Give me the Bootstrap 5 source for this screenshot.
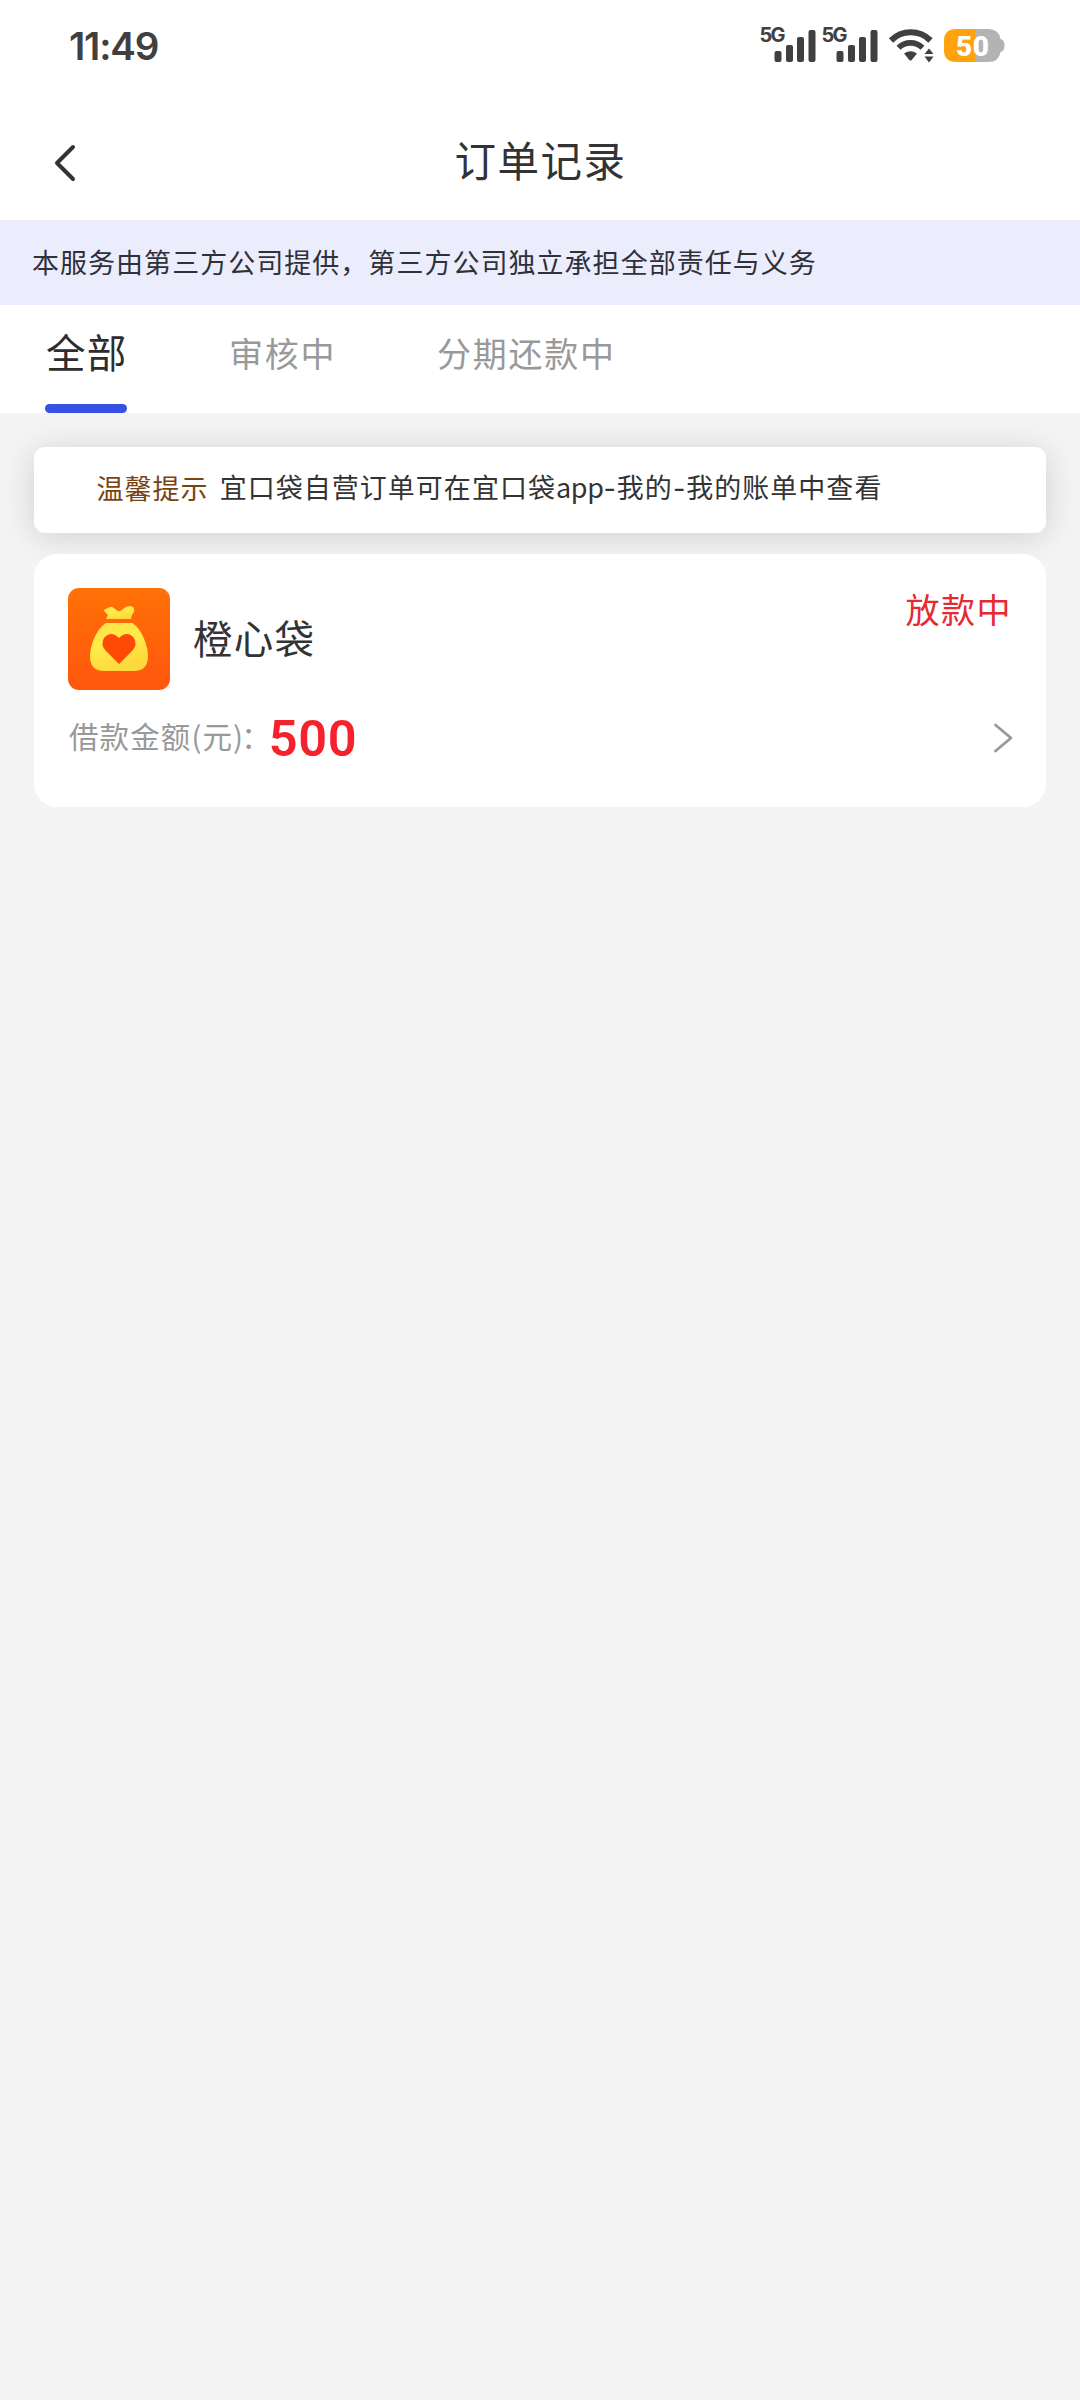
<!DOCTYPE html>
<html lang="zh-CN">
<head>
<meta charset="utf-8">
<meta name="viewport" content="width=device-width, initial-scale=1">
<title>订单记录</title>
<link href="https://cdn.jsdelivr.net/npm/bootstrap@5.3.0/dist/css/bootstrap.min.css" rel="stylesheet">
<style>
  body { background: #f4f4f4; color: #333; font-family: "Noto Sans CJK SC", sans-serif; min-height: 2400px; font-weight: 400; }
  .status-bar { height: 90px; padding: 0 75px 0 69px; }
  .clock { font: 600 38.5px/90px Inter, sans-serif; color: #404040; letter-spacing: -1.2px; padding-top: 2px; }
  .status-icons { width: 247px; height: 90px; }
  .page-head { height: 130px; }
  .back-btn { width: 130px; height: 146px; }
  .page-title { font-size: 41.5px; line-height: 60px; letter-spacing: 1.5px; padding: 7px 0 0 1px; }
  .third-party { height: 85px; background: #ebedfd; padding-left: 32px; font-size: 27px; letter-spacing: 1.03px; color: #2f3038; }
  .order-tabs { height: 108px; padding-left: 45px; gap: 102px; }
  .order-tabs .nav-link { color: #999; font-size: 34px; letter-spacing: 1.7px; height: 108px; line-height: 96px; }
  .order-tabs .nav-link.active { color: #2d2d2d; font-size: 39.5px; letter-spacing: 1.2px; line-height: 91px; width: 82px; text-indent: 1px; }
  .order-tabs .nav-link + .nav-link + .nav-link { margin-left: -1px; }
  .tab-ink { height: 9px; border-radius: 5px; background: #3651e4; }
  .order-list { padding: 34px 34px 0; }
  .notice { height: 86px; border-radius: 11px; padding: 0 0 4px 62.5px; font-size: 27px; letter-spacing: 1.03px; box-shadow: 0 4px 34px rgba(0,0,0,.15); }
  .notice-label { color: #7a4313; margin-right: 11px; }
  .latin { letter-spacing: -.4px; }
  .dash { font-family: Inter, sans-serif; letter-spacing: .9px; }
  .order-card { margin-top: 21px; height: 253px; border-radius: 23px; padding: 34px 33px 0 34px; }
  .shop-name { font-size: 39.5px; letter-spacing: 1.3px; line-height: 98px; margin-left: 23px; }
  .order-state { color: #e62a32; font-size: 34px; letter-spacing: 1.5px; line-height: 42px; margin-right: 1px; }
  .amount-row { height: 96px; }
  .amount-label { color: #999; font-size: 29.5px; letter-spacing: 1.1px; padding: 0 0 5px 1px; margin-right: -3px; }
  .colon { margin-left: -3px; }
  .amount { font: 600 50.5px/60px Roboto, sans-serif; color: #f5222d; letter-spacing: .7px; padding-top: 1px; }
</style>
</head>
<body>
<header class="bg-white">
  <div class="status-bar d-flex justify-content-between align-items-center">
    <span class="clock">11:49</span>
    <svg class="status-icons" viewBox="758 0 247 90">
      <g fill="#404040">
        <g id="signal">
          <text x="759.5" y="41.500" font-family="Inter" font-weight="700" font-size="20" textLength="26">5G</text>
          <rect x="774.5" y="51" width="7" height="11" rx="2"/>
          <rect x="786" y="45" width="7" height="17" rx="2"/>
          <rect x="797" y="37" width="7" height="25" rx="2"/>
          <rect x="808.5" y="30" width="7" height="32" rx="2"/>
        </g>
        <use href="#signal" x="62"/>
        <path d="M904 53.500Q910.500 49 917 53.500L911.700 60Q910.500 61.200 909.300 60Z"/>
        <path d="M929 48.500L933.500 54H924.500ZM929 62.500L933.500 56.500H924.500Z"/>
      </g>
      <g fill="none" stroke="#404040">
        <path d="M891 40.500A28 28 0 0 1 930.500 40.500" stroke-width="6"/>
        <path d="M898.500 47.800A17 17 0 0 1 922.500 47.800" stroke-width="5.600"/>
      </g>
      <path d="M956 29H975V62H956Q944 62 944 50V41Q944 29 956 29Z" fill="#ffa20b"/>
      <path d="M975 29H988Q999 29 1000.500 39Q1004.500 40 1004.500 45.500T1000.500 52Q999 62 988 62H975Z" fill="#b3b3b3"/>
      <text x="956" y="55.500" font-family="Roboto" font-weight="900" font-size="28" fill="#fff" textLength="33">50</text>
    </svg>
  </div>
  <div class="page-head d-flex align-items-center position-relative justify-content-center">
    <button class="back-btn btn p-0 border-0 position-absolute start-0" aria-label="返回">
      <svg width="130" height="146" viewBox="0 82 130 146" fill="none" stroke="#333" stroke-width="4" stroke-linecap="round" stroke-linejoin="round"><path d="M73 147L57 163L73 179"/></svg>
    </button>
    <h1 class="page-title fw-normal mb-0">订单记录</h1>
  </div>
</header>
<div class="third-party d-flex align-items-center">本服务由第三方公司提供，第三方公司独立承担全部责任与义务</div>
<nav class="order-tabs nav bg-white flex-nowrap">
  <a class="nav-link active p-0 d-flex flex-column justify-content-between text-nowrap" href="#"><span>全部</span><span class="tab-ink"></span></a>
  <a class="nav-link p-0" href="#">审核中</a>
  <a class="nav-link p-0" href="#">分期还款中</a>
</nav>
<main class="order-list">
  <div class="notice bg-white d-flex align-items-center"><span class="notice-label">温馨提示</span><span>宜口袋自营订单可在宜口袋<span class="latin">app</span><span class="dash">-</span>我的<span class="dash">-</span>我的账单中查看</span></div>
  <section class="order-card bg-white">
    <div class="d-flex">
      <svg width="102" height="102" viewBox="0 0 102 102">
        <defs>
          <linearGradient id="tile" x2="0" y2="1"><stop stop-color="#ff7106"/><stop offset="1" stop-color="#ff560e"/></linearGradient>
          <linearGradient id="bag" x2=".4" y2="1"><stop stop-color="#ffe04e"/><stop offset=".5" stop-color="#ffec48"/><stop offset="1" stop-color="#ffd83c"/></linearGradient>
        </defs>
        <rect width="102" height="102" rx="11" fill="url(#tile)"/>
        <path d="M38 31L40 27L35.500 22.500Q37 20.500 40 20Q44 17.500 46.500 20.500Q51 25.500 55 21Q60 16.500 65 19Q67.500 21.500 65 25.500Q62.500 28.500 63.500 31Z" fill="url(#bag)"/>
        <path d="M38 35H64.500Q72 40 77 53Q80 61 80 68Q80 83 66 83H36Q22 83 22 68Q22 61 25 53Q30 40 38 35Z" fill="url(#bag)"/>
        <path d="M51 76L38 63Q32 57 36 50Q43 42 51 50Q59 42 66 50Q70 57 64 63Z" fill="#ff4a05"/>
      </svg>
      <div class="shop-name">橙心袋</div>
      <div class="order-state ms-auto">放款中</div>
    </div>
    <div class="amount-row d-flex align-items-center">
      <span class="amount-label">借款金额(元)<span class="colon">：</span></span><span class="amount">500</span>
      <svg class="ms-auto" width="20" height="32" viewBox="0 0 20 32" fill="none" stroke="#999" stroke-width="2.800" stroke-linecap="round" stroke-linejoin="round"><path d="M2.500 3L18 16L2.500 29"/></svg>
    </div>
  </section>
</main>
<script src="https://cdn.jsdelivr.net/npm/bootstrap@5.3.0/dist/js/bootstrap.bundle.min.js"></script>
</body>
</html>
